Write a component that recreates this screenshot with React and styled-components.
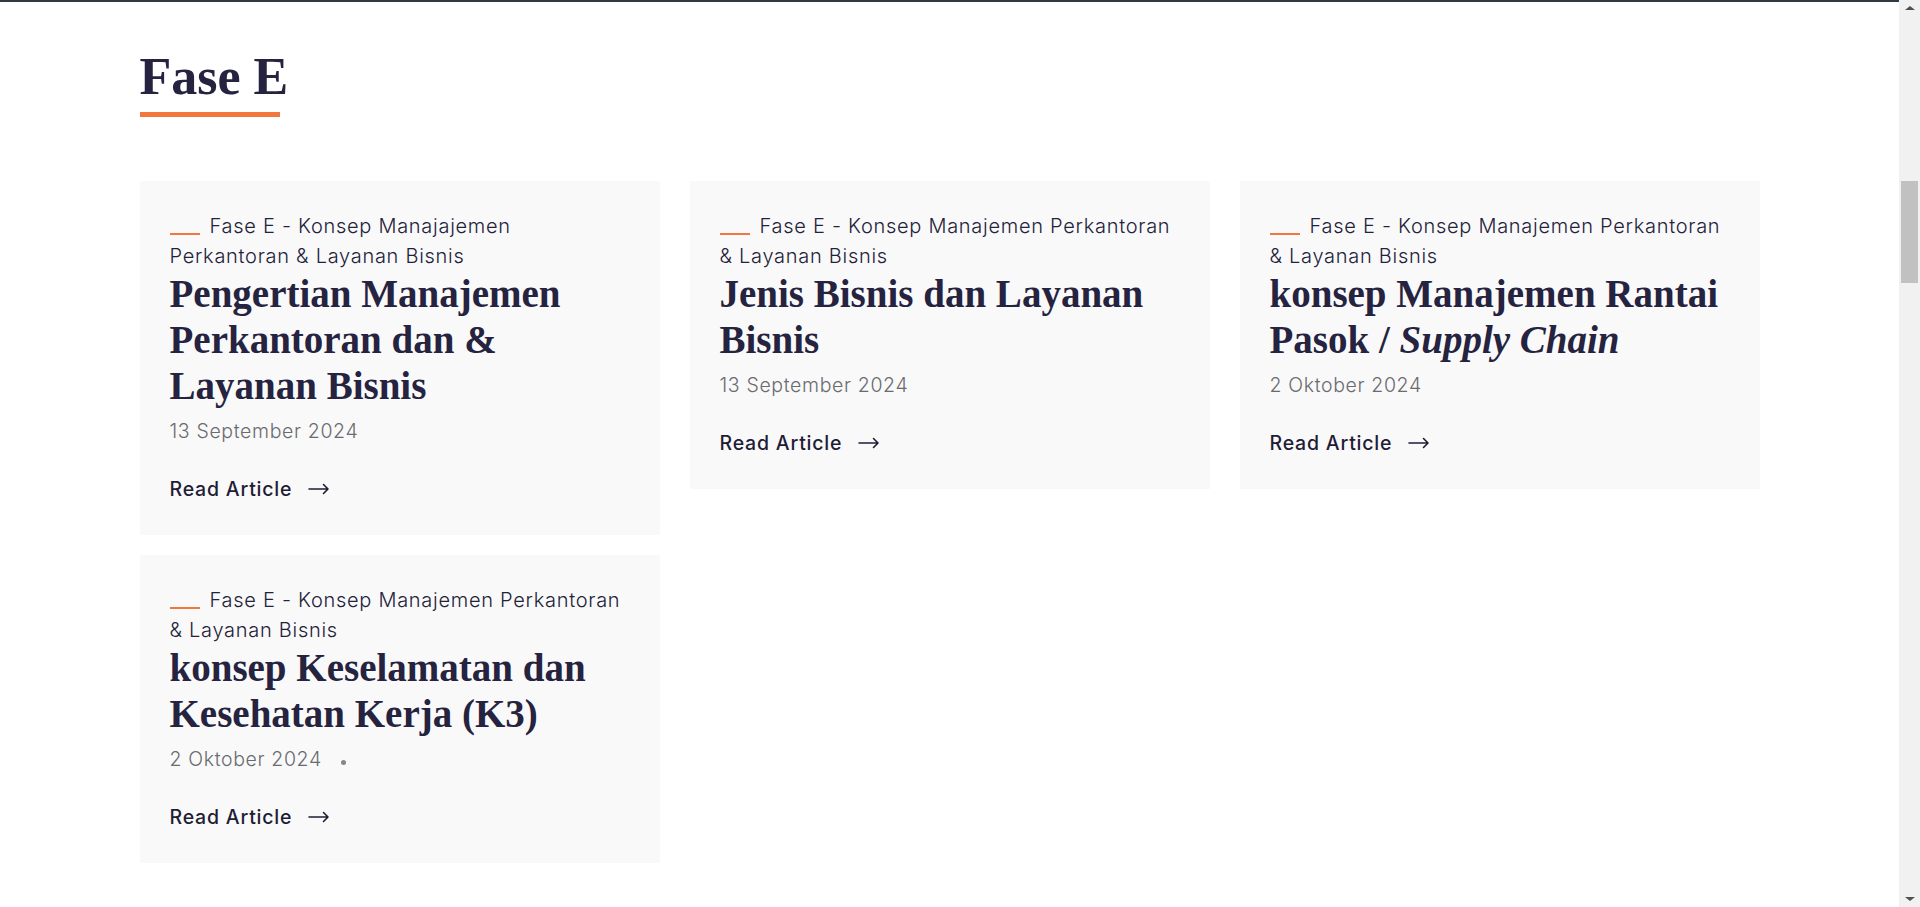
import React from "react";
import styled, { createGlobalStyle } from "styled-components";

const GlobalStyle = createGlobalStyle`
  html, body {
    margin: 0;
    padding: 0;
    height: 100%;
    overflow: hidden;
    background: #ffffff;
  }
  * {
    box-sizing: border-box;
  }
`;

const Page = styled.div`
  display: flex;
  height: 100vh;
  width: 100%;
`;

const Main = styled.main`
  flex: 1;
  border-top: 2px solid #2f3c41;
  overflow: hidden;
`;

const Container = styled.section`
  width: 1620px;
  margin: 0 auto;
  padding-top: 46px;
`;

const SectionTitle = styled.h2`
  margin: 0;
  font-family: "Liberation Serif", "Times New Roman", serif;
  font-weight: 700;
  font-size: 52px;
  line-height: 1.12;
  color: #25233f;

  &::after {
    content: "";
    display: block;
    width: 140px;
    height: 5px;
    margin-top: 6px;
    background: #f1773e;
  }
`;

const Grid = styled.div`
  display: grid;
  grid-template-columns: repeat(3, 1fr);
  gap: 20px 30px;
  align-items: start;
  margin-top: 64px;
`;

const Card = styled.article`
  background: #f9f9f9;
  padding: 30px 30px 31px;
  font-family: Inter, "Open Sans", sans-serif;
`;

const Category = styled.div`
  font-size: 20px;
  font-weight: 300;
  letter-spacing: 0.72px;
  line-height: 30px;
  color: #23223a;

  &::before {
    content: "";
    display: inline-block;
    width: 30px;
    height: 2px;
    margin-right: 10px;
    background: #f1773e;
    vertical-align: -2px;
  }
`;

const Title = styled.h3`
  margin: 0;
  font-family: "Liberation Serif", "Times New Roman", serif;
  font-weight: 700;
  font-size: 39px;
  line-height: 46px;
  color: #25233f;

  em {
    font-style: italic;
  }
`;

const Meta = styled.div`
  margin-top: 7px;
  font-size: 19.5px;
  font-weight: 300;
  letter-spacing: 0.65px;
  line-height: 30px;
  color: #6a6b70;
  display: flex;
  align-items: center;
`;

const Dot = styled.span`
  width: 5px;
  height: 5px;
  border-radius: 50%;
  background: #86878b;
  margin: 6px 0 0 19px;
`;

const ReadLink = styled.a`
  margin-top: 28px;
  display: flex;
  align-items: center;
  gap: 16px;
  font-size: 19.5px;
  font-weight: 500;
  letter-spacing: 0.8px;
  line-height: 30px;
  color: #1f1d36;
  text-decoration: none;
  cursor: pointer;
`;

const ScrollBar = styled.div`
  width: 21px;
  flex: 0 0 21px;
  background: #f1f1f1;
  display: flex;
  flex-direction: column;
  align-items: center;
`;

const ScrollArrow = styled.span`
  width: 0;
  height: 0;
  border-left: 5px solid transparent;
  border-right: 5px solid transparent;
  ${({ down }) =>
    down
      ? "border-top: 4px solid #505050; margin-top: auto; margin-bottom: 6px;"
      : "border-bottom: 4px solid #505050; margin-top: 6px;"}
`;

const Thumb = styled.div`
  width: 17px;
  height: 102px;
  margin-top: 171px;
  background: #c1c1c1;
`;

const Arrow = () => (
  <svg width="22" height="12" viewBox="0 0 22 12" fill="none">
    <path
      d="M1 6h19M15.5 1.5L20 6l-4.5 4.5"
      stroke="#1f1d36"
      strokeWidth="1.6"
      strokeLinecap="round"
      strokeLinejoin="round"
    />
  </svg>
);

const articles = [
  {
    category: "Fase E - Konsep Manajajemen Perkantoran & Layanan Bisnis",
    title: <>Pengertian Manajemen Perkantoran dan &amp; Layanan Bisnis</>,
    date: "13 September 2024",
  },
  {
    category: "Fase E - Konsep Manajemen Perkantoran & Layanan Bisnis",
    title: <>Jenis Bisnis dan Layanan Bisnis</>,
    date: "13 September 2024",
  },
  {
    category: "Fase E - Konsep Manajemen Perkantoran & Layanan Bisnis",
    title: (
      <>
        konsep Manajemen Rantai Pasok / <em>Supply Chain</em>
      </>
    ),
    date: "2 Oktober 2024",
  },
  {
    category: "Fase E - Konsep Manajemen Perkantoran & Layanan Bisnis",
    title: <>konsep Keselamatan dan Kesehatan Kerja (K3)</>,
    date: "2 Oktober 2024",
    dot: true,
  },
];

const App = () => {
  return (
    <>
      <GlobalStyle />
      <Page>
        <Main>
          <Container>
            <SectionTitle>Fase E</SectionTitle>
            <Grid>
              {articles.map((item, index) => (
                <Card key={index}>
                  <Category>{item.category}</Category>
                  <Title>{item.title}</Title>
                  <Meta>
                    {item.date}
                    {item.dot && <Dot />}
                  </Meta>
                  <ReadLink>
                    Read Article
                    <Arrow />
                  </ReadLink>
                </Card>
              ))}
            </Grid>
          </Container>
        </Main>
        <ScrollBar>
          <ScrollArrow />
          <Thumb />
          <ScrollArrow down />
        </ScrollBar>
      </Page>
    </>
  );
};

export default App;
